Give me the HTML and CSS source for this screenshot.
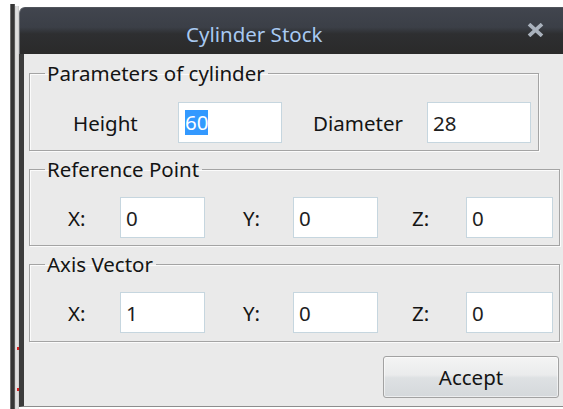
FILE: index.html
```html
<!DOCTYPE html>
<html lang="en">
<head>
<meta charset="utf-8">
<title>Cylinder Stock</title>
<link rel="stylesheet" href="styles.css">
</head>
<body>
<div class="screen">
  <div class="edge-dark"></div>
  <div class="edge-light"></div>
  <div class="window">
    <div class="titlebar">
      <span class="title">Cylinder Stock</span>
      <svg class="close" width="17" height="14" viewBox="0 0 17 14" aria-label="Close">
        <path d="M2 1.2 L15 12.8 M15 1.2 L2 12.8" stroke="#aab2bd" stroke-width="3.8" fill="none"/>
      </svg>
    </div>
    <div class="main">
      <div class="body">
        <fieldset class="group group-params">
          <legend>Parameters of cylinder</legend>
          <div class="row">
            <label class="lbl lbl-height">Height</label>
            <div class="field field-wide"><span class="sel">60</span></div>
            <label class="lbl lbl-diam">Diameter</label>
            <div class="field field-wide">28</div>
          </div>
        </fieldset>

        <fieldset class="group group-xyz">
          <legend>Reference Point</legend>
          <div class="row">
            <label class="lbl lbl-x">X:</label>
            <div class="field field-short">0</div>
            <label class="lbl lbl-y">Y:</label>
            <div class="field field-short">0</div>
            <label class="lbl lbl-z">Z:</label>
            <div class="field field-last">0</div>
          </div>
        </fieldset>

        <fieldset class="group group-xyz group-axis">
          <legend>Axis Vector</legend>
          <div class="row">
            <label class="lbl lbl-x">X:</label>
            <div class="field field-short">1</div>
            <label class="lbl lbl-y">Y:</label>
            <div class="field field-short">0</div>
            <label class="lbl lbl-z">Z:</label>
            <div class="field field-last">0</div>
          </div>
        </fieldset>

        <button class="btn" type="button">Accept</button>
      </div>
    </div>
  </div>
</div>
</body>
</html>
```

FILE: styles.css
```css
* {
  box-sizing: border-box;
}

html,
body {
  margin: 0;
  background: #ffffff;
}

body {
  font-family: "Noto Sans", "Open Sans", sans-serif;
  font-size: 20.5px;
  color: #141414;
}

.screen {
  display: flex;
  width: 563px;
  height: 409px;
  padding-left: 10px;
  overflow: hidden;
}

/* frame of the application behind the dialog */
.edge-dark {
  width: 5px;
  margin-top: 4px;
  background: linear-gradient(90deg, #8e8e8e, #363636 30%, #363636 70%, #6c6c6c);
}

.edge-light {
  width: 4px;
  margin-top: 6px;
  background:
    linear-gradient(#d21e1e, #d21e1e) 2px 341px / 2px 3px no-repeat,
    linear-gradient(#d21e1e, #d21e1e) 2px 382px / 2px 3px no-repeat,
    linear-gradient(90deg, #cfcfcf, #e6e6e6 50%, #c9c9c9);
}

/* dialog window */
.window {
  flex: 1;
  display: flex;
  flex-direction: column;
  margin-top: 7px;
  margin-bottom: 2px;
}

.titlebar {
  height: 47px;
  display: flex;
  justify-content: space-between;
  align-items: flex-start;
  padding: 7px 19px 0 166px;
  border-top-left-radius: 6px;
  border-left: 1px solid #6a6d72;
  border-top: 1px solid #50545b;
  background: linear-gradient(#41454e 0%, #3b3f47 42%, #2e2f31 56%, #2a2a2a 100%);
}

.title {
  margin-top: -1px;
  line-height: 40px;
  color: #a8c9f1;
}

.close {
  margin-top: 8px;
}

.main {
  flex: 1;
  display: flex;
  border-left: 5px solid #3c3c3c;
  border-bottom: 1px solid #8d8d8d;
}

.body {
  flex: 1;
  display: flex;
  flex-direction: column;
  align-items: flex-start;
  padding: 7px 0 7px 5px;
  background: #eaeaea;
}

/* group boxes */
.group {
  margin: 0;
  padding: 17px 0 7px 0;
  min-width: 0;
  border: 1px solid #a4a4a4;
  box-shadow: 1px 1px 0 #fbfbfb, inset 1px 1px 0 #fbfbfb;
}

.group legend {
  margin-left: 15px;
  padding: 0 3px 0 2px;
  line-height: 24px;
}

.group-params {
  width: 510px;
}

.group-xyz {
  width: 531px;
  margin-top: 6px;
  padding-top: 16px;
}

.group-axis {
  padding-bottom: 8px;
}

.row {
  display: flex;
  align-items: center;
  height: 41px;
}

.lbl {
  flex: none;
}

.lbl-height {
  width: 148px;
  padding-left: 43px;
}

.lbl-diam {
  width: 145px;
  padding-left: 31px;
}

.lbl-x {
  width: 90px;
  padding-left: 38px;
}

.lbl-y {
  width: 88px;
  padding-left: 38px;
}

.lbl-z {
  width: 88px;
  padding-left: 34px;
}

/* text boxes */
.field {
  flex: none;
  height: 41px;
  display: flex;
  align-items: center;
  padding-left: 5px;
  background: #ffffff;
  border: 1px solid #c6d6df;
  color: #1e1e1e;
}

.field-wide {
  width: 104px;
}

.field-short {
  width: 85px;
}

.field-last {
  width: 87px;
}

.sel {
  margin-left: 1px;
  line-height: 25px;
  background: #3399ff;
  color: #ffffff;
}

/* push button */
.btn {
  align-self: flex-end;
  width: 176px;
  height: 42px;
  margin: 14px 4px 0 0;
  padding: 0;
  font: inherit;
  color: #141414;
  border: 1px solid #a2a2a2;
  border-radius: 3px;
  background: linear-gradient(#f4f4f4 0%, #eaebec 45%, #dee1e3 52%, #d4d8db 100%);
  box-shadow: inset 0 0 0 1px rgba(255, 255, 255, 0.55);
}
```
